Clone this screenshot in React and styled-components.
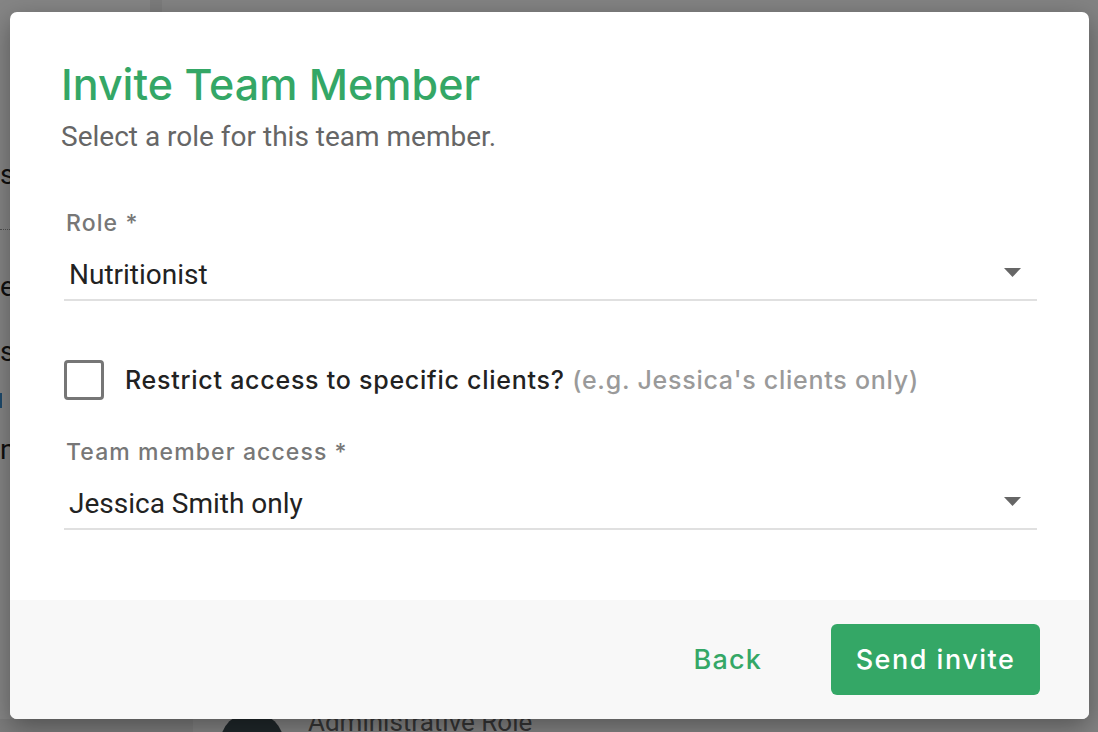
import React from 'react'
import styled, { createGlobalStyle } from 'styled-components'

const GlobalStyle = createGlobalStyle`
  html, body { margin: 0; padding: 0; }
  body { font-family: Roboto, "Liberation Sans", sans-serif; overflow: hidden; }
  * { box-sizing: border-box; }
`

const green = '#34a766'
const heading = 'Inter, "DejaVu Sans", sans-serif'

const Page = styled.div`
  position: relative;
  width: 1098px;
  height: 732px;
  display: flex;
  background: #fff;
  overflow: hidden;
`
const Sidebar = styled.div`
  width: 150px;
  background: #fff;
  display: flex;
  flex-direction: column;
  font-size: 28px;
  line-height: 30px;
  color: #1e1e1e;
`
const SideText = styled.div`
  margin-top: ${p => p.top}px;
  height: 30px;
`
const SideDots = styled.div`
  margin-top: ${p => p.top}px;
  width: 12px;
  border-top: 1px dotted #999;
`
const SideMark = styled.div`
  margin-top: ${p => p.top}px;
  width: 2px;
  height: 15px;
  background: #3b8fd0;
`
const SideFooter = styled.div`
  margin-top: auto;
  height: 13px;
  background: #eee;
`
const Divider = styled.div`
  width: 12px;
  background: #eee;
`
const Main = styled.div`
  flex: 1;
  display: flex;
  flex-direction: column;
  justify-content: flex-end;
  background: #fcfcfc;
`
const RoleRow = styled.div`
  display: flex;
  align-items: flex-start;
  height: 20px;
  overflow: hidden;
`
const Gutter = styled.div`
  width: 31px;
  height: 100%;
  background: #eee;
`
const Avatar = styled.div`
  width: 64px;
  height: 64px;
  margin-left: 27px;
  border-radius: 50%;
  background: #3d4b52;
`
const RoleName = styled.div`
  margin: -5px 0 0 24px;
  font-size: 26px;
  line-height: 30px;
  color: #666;
`
const Overlay = styled.div`
  position: absolute;
  inset: 0;
  background: rgba(0, 0, 0, 0.48);
  display: flex;
  padding: 12px 9px 13px 10px;
`
const Dialog = styled.div`
  flex: 1;
  display: flex;
  flex-direction: column;
  background: #fff;
  border-radius: 7px;
  overflow: hidden;
  box-shadow: 0 8px 26px rgba(0, 0, 0, 0.35);
`
const Body = styled.div`
  flex: 1;
  padding: 47px 52px 0 51px;
  display: flex;
  flex-direction: column;
`
const Title = styled.h1`
  margin: 0;
  font-family: ${heading};
  font-weight: 500;
  font-size: 43px;
  line-height: 50px;
  color: ${green};
`
const Subtitle = styled.p`
  margin: 12px 0 0;
  font-size: 28px;
  line-height: 32px;
  color: #666;
`
const Field = styled.div`
  margin: ${p => p.top}px 0 0 3px;
  display: flex;
  flex-direction: column;
`
const Label = styled.div`
  margin-left: 2px;
  font-family: ${heading};
  font-weight: 500;
  font-size: 23px;
  line-height: 28px;
  letter-spacing: 1.1px;
  color: #777;
`
const Select = styled.div`
  display: flex;
  align-items: center;
  justify-content: space-between;
  height: 64px;
  padding: 21px 16px 8px 5px;
  border-bottom: 2px solid #e0e0e0;
  font-size: 28px;
  color: #222;

  svg { margin-bottom: 4px; }
`
const CheckRow = styled.label`
  margin: 59px 0 0 3px;
  display: flex;
  align-items: center;
  gap: 21px;
  font-family: ${heading};
  font-weight: 500;
  font-size: 25px;
  letter-spacing: 0.75px;
  color: #222;
`
const Box = styled.span`
  width: 40px;
  height: 40px;
  border: 3px solid #767676;
  border-radius: 4px;
`
const Hint = styled.span`
  color: #9a9a9a;
`
const Footer = styled.div`
  height: 119px;
  background: #f8f8f8;
  display: flex;
  align-items: center;
  justify-content: flex-end;
  gap: 69px;
  padding: 0 49px 0 0;
`
const TextButton = styled.button`
  border: none;
  background: none;
  padding: 0;
  font-family: ${heading};
  font-weight: 500;
  font-size: 27px;
  letter-spacing: 1.2px;
  color: ${green};
`
const PrimaryButton = styled.button`
  border: none;
  border-radius: 6px;
  width: 209px;
  height: 71px;
  background: ${green};
  color: #fff;
  font-family: ${heading};
  font-weight: 500;
  font-size: 27px;
  letter-spacing: 1.5px;
`

const Arrow = () => (
  <svg width="17" height="9" viewBox="0 0 17 9">
    <path d="M0 0 L17 0 L8.5 9 Z" fill="#666" />
  </svg>
)

const SelectField = ({ label, value, top }) => (
  <Field top={top}>
    <Label>{label}</Label>
    <Select>
      <span>{value}</span>
      <Arrow />
    </Select>
  </Field>
)

export default function App() {
  return (
    <Page>
      <GlobalStyle />
      <Sidebar>
        <SideText top={160}>s</SideText>
        <SideDots top={39} />
        <SideText top={42}>es</SideText>
        <SideText top={35}>s</SideText>
        <SideMark top={26} />
        <SideText top={27}>n:</SideText>
        <SideFooter />
      </Sidebar>
      <Divider />
      <Main>
        <RoleRow>
          <Gutter />
          <Avatar />
          <RoleName>Administrative Role</RoleName>
        </RoleRow>
      </Main>
      <Overlay>
        <Dialog>
          <Body>
            <Title>Invite Team Member</Title>
            <Subtitle>Select a role for this team member.</Subtitle>
            <SelectField top={56} label="Role *" value="Nutritionist" />
            <CheckRow>
              <Box />
              <span>Restrict access to specific clients? <Hint>(e.g. Jessica's clients only)</Hint></span>
            </CheckRow>
            <SelectField top={38} label="Team member access *" value="Jessica Smith only" />
          </Body>
          <Footer>
            <TextButton>Back</TextButton>
            <PrimaryButton>Send invite</PrimaryButton>
          </Footer>
        </Dialog>
      </Overlay>
    </Page>
  )
}
